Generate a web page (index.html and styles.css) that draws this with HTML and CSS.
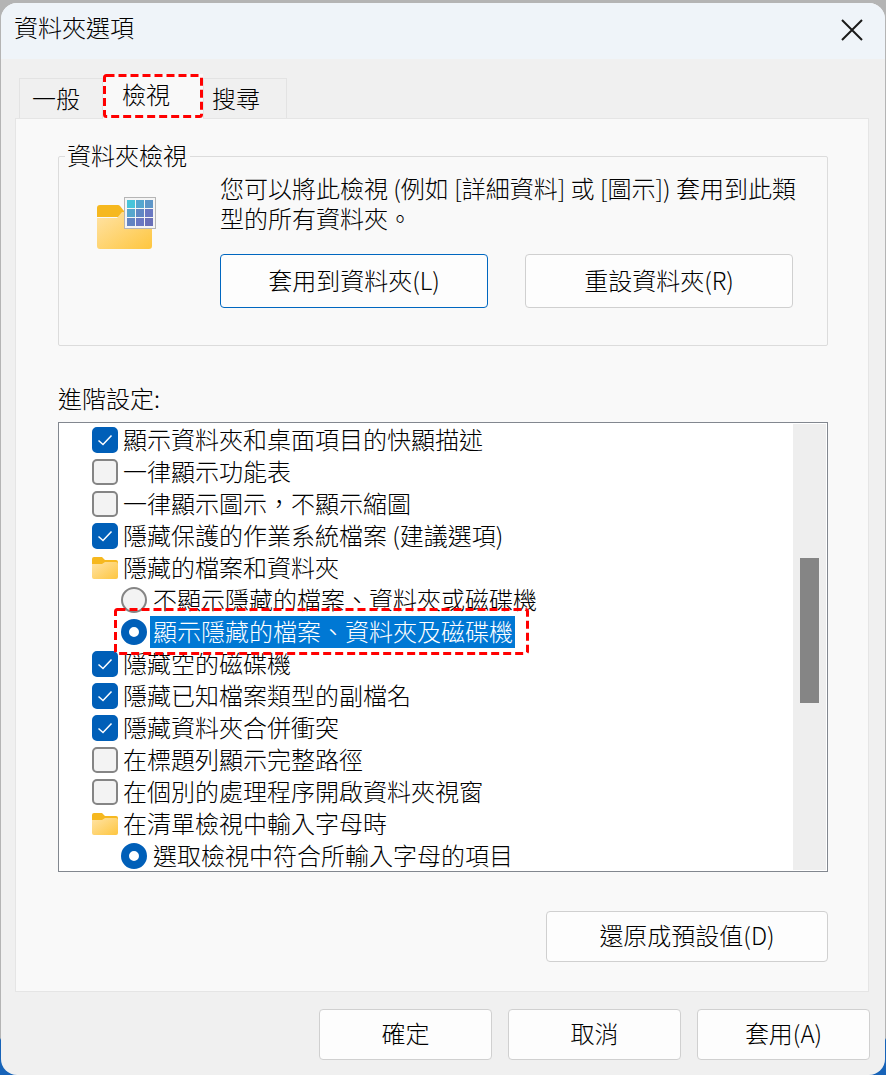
FILE: index.html
```html
<!DOCTYPE html>
<html lang="zh-Hant">
<head>
<meta charset="utf-8">
<title>資料夾選項</title>
<link rel="stylesheet" href="styles.css">
</head>
<body>
<svg class="defs" width="0" height="0"><defs>
  <linearGradient id="folderFront" x1="0" y1="0" x2="1" y2="1"><stop offset="0" stop-color="#ffe3a6"/><stop offset="1" stop-color="#fec63f"/></linearGradient>
</defs></svg>
<div class="window">
  <header class="titlebar">
    <span class="title">資料夾選項</span>
    <svg class="close" width="22" height="22" viewBox="0 0 22 22"><path d="M1 1L21 21M21 1L1 21" stroke="#1a1a1a" stroke-width="2" fill="none"/></svg>
  </header>
  <main class="content">
    <div class="tabs">
      <div class="tab tab-general">一般</div>
      <div class="tab tab-view">檢視</div>
      <div class="tab tab-search">搜尋</div>
      <svg class="mark mark-tab" width="100" height="44" viewBox="0 0 100 44"><rect x="1.500" y="1.500" width="97" height="41" rx="2" fill="none" stroke="#f00" stroke-width="3" stroke-dasharray="8 4"/></svg>
    </div>
    <section class="panel">
      <div class="group">
        <div class="legend">資料夾檢視</div>
        <div class="group-body">
          <svg class="folder-icon" width="60" height="53" viewBox="0 0 60 53">
            <path d="M0 11a3 3 0 0 1 3-3h18a3 3 0 0 1 2 1l4 5v6H0z" fill="#f6b81f"/>
            <path d="M0 21h20l5-6h27a3 3 0 0 1 3 3v31a3 3 0 0 1-3 3H3a3 3 0 0 1-3-3z" fill="url(#folderFront)"/>
            <rect x="27.500" y="0.500" width="31" height="31" fill="#f5f5f5" stroke="#b5b5b5"/>
            <rect x="30" y="3" width="8" height="8" fill="#47c4da"/><rect x="39" y="3" width="8" height="8" fill="#55a6cf"/><rect x="48" y="3" width="8" height="8" fill="#5e96c8"/>
            <rect x="30" y="12" width="8" height="8" fill="#57a6cd"/><rect x="39" y="12" width="8" height="8" fill="#6087c4"/><rect x="48" y="12" width="8" height="8" fill="#6a78c2"/>
            <rect x="30" y="21" width="8" height="8" fill="#6284c2"/><rect x="39" y="21" width="8" height="8" fill="#6a78c2"/><rect x="48" y="21" width="8" height="8" fill="#6a70b8"/>
          </svg>
          <div class="group-main">
            <p class="desc">您可以將此檢視 (例如 [詳細資料] 或 [圖示]) 套用到此類型的所有資料夾。</p>
            <div class="group-buttons">
              <button class="btn btn-default btn-folder">套用到資料夾(L)</button>
              <button class="btn btn-folder">重設資料夾(R)</button>
            </div>
          </div>
        </div>
      </div>
      <div class="list-label">進階設定:</div>
      <div class="listbox">
        <div class="rows">
          <div class="row"><span class="check on"><svg width="16" height="12" viewBox="0 0 16 12"><path d="M1.500 6.500L6 10.500L14.500 1.500" stroke="#fff" stroke-width="1.500" fill="none"/></svg></span>顯示資料夾和桌面項目的快顯描述</div>
          <div class="row"><span class="check"></span>一律顯示功能表</div>
          <div class="row"><span class="check"></span>一律顯示圖示，不顯示縮圖</div>
          <div class="row"><span class="check on"><svg width="16" height="12" viewBox="0 0 16 12"><path d="M1.500 6.500L6 10.500L14.500 1.500" stroke="#fff" stroke-width="1.500" fill="none"/></svg></span>隱藏保護的作業系統檔案 (建議選項)</div>
          <div class="row"><svg class="mini-folder" width="26" height="22" viewBox="0 0 26 22"><path d="M0 2a2 2 0 0 1 2-2h8l3 3h11a2 2 0 0 1 2 2v4H0z" fill="#f6b81f"/><path d="M0 7h10l3-2h11a2 2 0 0 1 2 2v13a2 2 0 0 1-2 2H2a2 2 0 0 1-2-2z" fill="url(#folderFront)"/></svg>隱藏的檔案和資料夾</div>
          <div class="row sub"><span class="radio"></span>不顯示隱藏的檔案、資料夾或磁碟機</div>
          <div class="row sub"><span class="radio on"></span><span class="selected">顯示隱藏的檔案、資料夾及磁碟機</span></div>
          <div class="row"><span class="check on"><svg width="16" height="12" viewBox="0 0 16 12"><path d="M1.500 6.500L6 10.500L14.500 1.500" stroke="#fff" stroke-width="1.500" fill="none"/></svg></span>隱藏空的磁碟機</div>
          <div class="row"><span class="check on"><svg width="16" height="12" viewBox="0 0 16 12"><path d="M1.500 6.500L6 10.500L14.500 1.500" stroke="#fff" stroke-width="1.500" fill="none"/></svg></span>隱藏已知檔案類型的副檔名</div>
          <div class="row"><span class="check on"><svg width="16" height="12" viewBox="0 0 16 12"><path d="M1.500 6.500L6 10.500L14.500 1.500" stroke="#fff" stroke-width="1.500" fill="none"/></svg></span>隱藏資料夾合併衝突</div>
          <div class="row"><span class="check"></span>在標題列顯示完整路徑</div>
          <div class="row"><span class="check"></span>在個別的處理程序開啟資料夾視窗</div>
          <div class="row"><svg class="mini-folder" width="26" height="22" viewBox="0 0 26 22"><path d="M0 2a2 2 0 0 1 2-2h8l3 3h11a2 2 0 0 1 2 2v4H0z" fill="#f6b81f"/><path d="M0 7h10l3-2h11a2 2 0 0 1 2 2v13a2 2 0 0 1-2 2H2a2 2 0 0 1-2-2z" fill="url(#folderFront)"/></svg>在清單檢視中輸入字母時</div>
          <div class="row sub"><span class="radio on"></span>選取檢視中符合所輸入字母的項目</div>
        </div>
        <div class="scrollbar"><div class="thumb"></div></div>
        <svg class="mark mark-row" width="415" height="47" viewBox="0 0 415 47"><rect x="1.500" y="1.500" width="412" height="44" rx="2" fill="none" stroke="#f00" stroke-width="3" stroke-dasharray="8 4"/></svg>
      </div>
      <div class="restore-row"><button class="btn btn-restore">還原成預設值(D)</button></div>
    </section>
    <footer class="footer">
      <button class="btn btn-foot">確定</button>
      <button class="btn btn-foot">取消</button>
      <button class="btn btn-foot">套用(A)</button>
    </footer>
  </main>
</div>
</body>
</html>
```
FILE: styles.css
```css
* { box-sizing: border-box; }
html, body { margin: 0; height: 100%; }
body {
  background: linear-gradient(#b4b4b4 1038px, #1763b8 1040px);
  font-family: "Noto Sans CJK TC", "Liberation Sans", sans-serif;
  font-size: 24px;
  font-weight: 300;
  color: #000;
  overflow: hidden;
  padding: 3px 1px 0;
}
.defs { position: absolute; }
.window {
  width: 884px;
  height: 1072px;
  background: #f0f0f0;
  border-radius: 16px;
  overflow: hidden;
  display: flex;
  flex-direction: column;
}
.titlebar {
  height: 56px;
  flex: none;
  background: #eff4f9;
  display: flex;
  align-items: flex-start;
  justify-content: space-between;
  padding: 0 22px 0 13px;
}
.title { line-height: 48px; }
.close { margin-top: 16px; }
.content { flex: 1; padding: 0 15px 0 14px; display: flex; flex-direction: column; }
.tabs { display: flex; position: relative; height: 59px; padding: 19px 0 0 4px; }
.tab {
  height: 40px;
  background: #f0f0f0;
  border: 1px solid #e3e3e3;
  border-bottom: 0;
  line-height: 38px;
}
.tab-general { width: 84px; padding-left: 12px; }
.tab-search { width: 84px; padding-left: 8px; }
.tab-view {
  width: 100px;
  height: 45px;
  margin-top: -4px;
  padding-left: 19px;
  background: #f9f9f9;
  border: 0;
  line-height: 40px;
  position: relative;
  z-index: 2;
}
.mark { position: absolute; z-index: 3; pointer-events: none; }
.mark-tab { left: 88px; top: 15px; }
.panel {
  width: 854px;
  height: 874px;
  flex: none;
  background: #f9f9f9;
  border: 1px solid #e5e5e5;
  padding: 37px 40px 0 42px;
}
.group {
  position: relative;
  height: 190px;
  border: 1px solid #dcdcdc;
  border-radius: 2px;
}
.legend {
  position: absolute;
  left: 6px;
  top: -18px;
  padding: 0 3px 0 2px;
  background: #f9f9f9;
  line-height: 32px;
}
.group-body { display: flex; padding: 16px 0 0 38px; }
.folder-icon { margin-top: 24px; flex: none; }
.group-main { margin-left: 63px; }
.desc { margin: 0; width: 590px; line-height: 30px; }
.group-buttons { display: flex; gap: 37px; margin-top: 21px; }
.btn {
  font: inherit;
  color: #000;
  background: #fdfdfd;
  border: 1px solid #d0d0d0;
  border-radius: 4px;
  padding: 0 0 4px;
}
.btn-folder { width: 268px; height: 54px; padding-bottom: 3px; }
.btn-default { border: 1px solid #0067c0; }
.list-label { margin-top: 37px; height: 39px; line-height: 30px; }
.listbox {
  position: relative;
  height: 450px;
  background: #fff;
  border: 1px solid #82878f;
  display: flex;
}
.rows { flex: 1; padding-top: 1px; }
.row { height: 32px; display: flex; align-items: center; padding: 0 0 2px 33px; white-space: nowrap; line-height: 30px; }
.row.sub { padding-left: 62px; }
.check {
  width: 26px;
  height: 26px;
  flex: none;
  margin: 2px 5px 0 0;
  border-radius: 5px;
  background: #f3f3f3;
  border: 2px solid #858585;
  display: flex;
  align-items: center;
  justify-content: center;
}
.check.on { background: #005fb8; border-color: #005fb8; }
.mini-folder { margin: 2px 5px 0 0; flex: none; }
.radio {
  width: 26px;
  height: 26px;
  flex: none;
  margin: 2px 6px 0 0;
  border-radius: 50%;
  background: #f3f3f3;
  border: 2px solid #858585;
}
.radio.on { background: #fff; border: 8px solid #005fb8; }
.selected { background: #0078d4; color: #fff; height: 32px; margin: 2px 0 0 -3px; padding: 0 2px 0 3px; line-height: 30px; }
.scrollbar { width: 33px; flex: none; background: #eeeeee; padding-top: 134px; margin: 1px 1px 1px 0; display: flex; justify-content: center; }
.thumb { width: 19px; height: 145px; background: #858585; }
.mark-row { left: 55px; top: 185px; }
.restore-row { display: flex; justify-content: flex-end; margin-top: 39px; }
.btn-restore { width: 282px; height: 51px; }
.footer { display: flex; justify-content: flex-end; gap: 16px; margin-top: 17px; }
.btn-foot { width: 173px; height: 51px; }
```
